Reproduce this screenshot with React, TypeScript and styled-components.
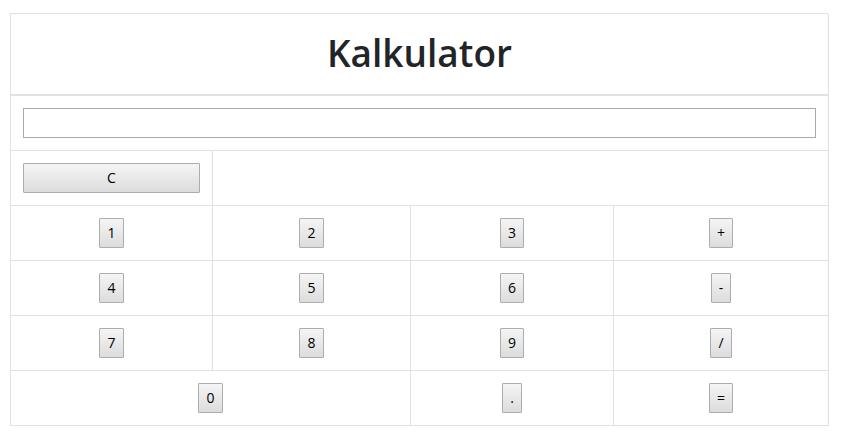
import React, { useState } from "react";
import styled, { createGlobalStyle } from "styled-components";

const GlobalStyle = createGlobalStyle`
  html, body { margin: 0; padding: 0; background: #fff; }
  body { font-family: "Open Sans", "Noto Sans", "Liberation Sans", sans-serif; color: #212529; }
  * { box-sizing: border-box; }
`;

const Page = styled.div`
  padding: 13px 0 0 10px;
`;

const Table = styled.div`
  display: grid;
  grid-template-columns: 202px 198px 203px 215px;
  width: 818px;
  border-top: 1px solid #dee2e6;
  border-left: 1px solid #dee2e6;
`;

const Cell = styled.div<{ $span?: number; $head?: boolean; $align?: "center" | "stretch" }>`
  grid-column: span ${(p) => p.$span ?? 1};
  border-right: 1px solid #dee2e6;
  border-bottom: ${(p) => (p.$head ? "2px" : "1px")} solid #dee2e6;
  padding: 12px;
  display: flex;
  justify-content: center;
  align-items: ${(p) => (p.$align === "stretch" ? "stretch" : "flex-start")};
  height: ${(p) => (p.$head ? "82px" : "55px")};
`;

const Title = styled.h1`
  margin: 0 0 8px;
  font-size: 37px;
  font-weight: 600;
  line-height: 54px;
  color: #212529;
`;

const Display = styled.input`
  width: 100%;
  height: 30px;
  border: 1px solid #a9a9a9;
  border-radius: 0;
  padding: 2px 4px;
  font-family: inherit;
  font-size: 14px;
  outline: none;
`;

const Key = styled.button<{ $wide?: boolean }>`
  height: 30px;
  width: ${(p) => (p.$wide ? "100%" : "auto")};
  padding: 0 7px;
  min-width: 19px;
  border: 1px solid #adadad;
  border-radius: 1px;
  background: linear-gradient(#f5f5f5, #dcdcdc);
  font-family: "Open Sans", "Noto Sans", sans-serif;
  font-size: 14px;
  color: #000;
  line-height: 28px;
  cursor: pointer;
`;

const rows: string[][] = [
  ["1", "2", "3", "+"],
  ["4", "5", "6", "-"],
  ["7", "8", "9", "/"],
];

export default function App() {
  const [value, setValue] = useState("");
  const press = (k: string) => {
    if (k === "=") {
      try {
        // eslint-disable-next-line no-new-func
        setValue(String(Function(`return (${value})`)()));
      } catch {
        setValue("");
      }
    } else setValue(value + k);
  };
  return (
    <>
      <GlobalStyle />
      <Page>
        <Table>
          <Cell $span={4} $head>
            <Title>Kalkulator</Title>
          </Cell>
          <Cell $span={4} $align="stretch">
            <Display value={value} onChange={(e) => setValue(e.target.value)} />
          </Cell>
          <Cell>
            <Key $wide onClick={() => setValue("")}>C</Key>
          </Cell>
          <Cell $span={3} />
          {rows.map((r) =>
            r.map((k) => (
              <Cell key={k}>
                <Key onClick={() => press(k)}>{k}</Key>
              </Cell>
            ))
          )}
          <Cell $span={2}>
            <Key onClick={() => press("0")}>0</Key>
          </Cell>
          <Cell>
            <Key onClick={() => press(".")}>.</Key>
          </Cell>
          <Cell>
            <Key onClick={() => press("=")}>=</Key>
          </Cell>
        </Table>
      </Page>
    </>
  );
}
